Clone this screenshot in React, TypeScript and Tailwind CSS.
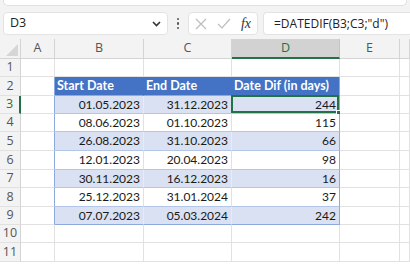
import React from "react";

const COLS = [21, 34, 89, 88, 108, 60, 10];
const LETTERS = ["A", "B", "C", "D", "E", ""];
const ROW_H = [18, 19, 18, 18, 19, 19, 18, 19, 18, 18, 19];

const DATA: [string, string, string][] = [
  ["01.05.2023", "31.12.2023", "244"],
  ["08.06.2023", "01.10.2023", "115"],
  ["26.08.2023", "31.10.2023", "66"],
  ["12.01.2023", "20.04.2023", "98"],
  ["30.11.2023", "16.12.2023", "16"],
  ["25.12.2023", "31.01.2024", "37"],
  ["07.07.2023", "05.03.2024", "242"],
];

const uiFont = { fontFamily: '"Open Sans", "Noto Sans", sans-serif' };
const cellFont = { fontFamily: 'Lato, "Liberation Sans", sans-serif' };

function Cell({
  w,
  className,
  children,
}: {
  w: number;
  className?: string;
  children?: React.ReactNode;
}) {
  return (
    <div
      className={"relative shrink-0 flex items-center border-r border-b " + (className ?? "")}
      style={{ width: w }}
    >
      {children}
    </div>
  );
}

export default function App() {
  return (
    <div className="w-[410px] h-[267px] overflow-hidden bg-[#f3f3f3] flex flex-col" style={uiFont}>
      {/* ribbon remnant */}
      <div className="h-[6px] mx-[3px] bg-white rounded-b-[5px] border border-t-0 border-[#e0e0e0]" />
      {/* formula bar */}
      <div className="mt-[6px] h-[23px] flex items-center pl-[3px]">
        <div className="w-[165px] h-[23px] bg-white rounded-[4px] border border-[#e3e3e3] flex items-center pl-[6px] pr-[6px]">
          <span className="text-[12.5px] text-[#222]">D3</span>
          <svg className="ml-auto" width="9" height="6" viewBox="0 0 9 6">
            <path d="M1 1 L4.5 4.5 L8 1" stroke="#333" strokeWidth="1.6" fill="none" />
          </svg>
        </div>
        <div className="w-[20px] flex flex-col items-center gap-[2px]">
          <div className="w-[2.5px] h-[2.5px] rounded-full bg-[#555]" />
          <div className="w-[2.5px] h-[2.5px] rounded-full bg-[#555]" />
          <div className="w-[2.5px] h-[2.5px] rounded-full bg-[#555]" />
        </div>
        <div className="w-[70px] h-[23px] bg-white rounded-[4px] border border-[#e3e3e3] flex items-center px-[6px]">
          <svg width="12" height="12" viewBox="0 0 12 12">
            <path d="M1 1 L11 11 M11 1 L1 11" stroke="#bdbdbd" strokeWidth="1.2" fill="none" />
          </svg>
          <svg className="ml-[10px]" width="14" height="11" viewBox="0 0 14 11">
            <path d="M1 6 L5 10 L13 1" stroke="#bdbdbd" strokeWidth="1.2" fill="none" />
          </svg>
          <span
            className="ml-auto text-[14px] italic text-[#333] leading-none"
            style={{ fontFamily: '"Liberation Serif", "DejaVu Serif", serif' }}
          >
            fx
          </span>
        </div>
        <div className="ml-[5px] flex-1 h-[23px] bg-white rounded-l-[4px] border border-r-0 border-[#e3e3e3] flex items-center pl-[10px]">
          <span className="text-[12px] text-[#222]">=DATEDIF(B3;C3;"d")</span>
        </div>
      </div>
      {/* column headers */}
      <div className="mt-[4px] h-[20px] flex">
        <div
          className="shrink-0 relative border-r border-b border-[#d4d4d4]"
          style={{ width: COLS[0] }}
        >
          <svg className="absolute right-[2px] bottom-[2px]" width="12" height="12" viewBox="0 0 12 12">
            <path d="M12 0 L12 12 L0 12 Z" fill="#d6d6d6" />
          </svg>
        </div>
        {LETTERS.map((l, i) => (
          <div
            key={i}
            className={
              "shrink-0 flex items-center justify-center text-[12.5px] border-r " +
              (l === "D"
                ? "bg-[#d2d2d2] text-[#217346] border-b-2 border-b-[#217346] border-r-[#c4c4c4]"
                : "text-[#555] border-b border-[#d4d4d4]")
            }
            style={{ width: COLS[i + 1] }}
          >
            {l}
          </div>
        ))}
      </div>
      {/* rows */}
      <div className="bg-white flex-1">
        {ROW_H.map((h, r) => {
          const row = r + 1;
          const inTable = row >= 2 && row <= 9;
          const isHeader = row === 2;
          const banded = row >= 3 && row <= 9 && row % 2 === 1;
          const d = row >= 3 && row <= 9 ? DATA[row - 3] : null;
          const tBg = isHeader ? "bg-[#4472c4]" : banded ? "bg-[#d9e1f2]" : "bg-white";
          const tBorderB = isHeader
            ? "border-b-[#8ea9db]"
            : row === 9
            ? "border-b-[#8ea9db]"
            : "border-b-[#b4c6e7]";
          const innerR = isHeader ? "border-r-[#4472c4]" : banded ? "border-r-[#e6ebf6]" : "border-r-[#e1e1e1]";
          return (
            <div key={row} className="flex" style={{ height: h }}>
              <Cell
                w={COLS[0]}
                className={
                  "justify-center bg-[#f3f3f3] text-[12.5px] border-b-[#e1e1e1] " +
                  (row === 3
                    ? "text-[#217346] border-r-2 border-r-[#217346]"
                    : "text-[#555] border-r-[#d4d4d4]")
                }
              >
                <span style={uiFont}>{row}</span>
              </Cell>
              {/* A */}
              <Cell
                w={COLS[1]}
                className={
                  "border-b-[#e1e1e1] " + (inTable ? "border-r-[#8ea9db]" : "border-r-[#e1e1e1]")
                }
              />
              {/* B, C, D */}
              {[0, 1, 2].map((c) => {
                const last = c === 2;
                if (!inTable) {
                  return <Cell key={c} w={COLS[c + 2]} className="border-b-[#e1e1e1] border-r-[#e1e1e1]" />;
                }
                const text = isHeader ? ["Start Date", "End Date", "Date Dif (in days)"][c] : d![c];
                return (
                  <Cell
                    key={c}
                    w={COLS[c + 2]}
                    className={
                      tBg +
                      " " +
                      tBorderB +
                      " " +
                      (last ? "border-r-[#8ea9db]" : innerR) +
                      (isHeader
                        ? " text-white font-bold justify-start pl-[2px]"
                        : " text-[#1a1a1a] justify-end pr-[3px]")
                    }
                  >
                    <span className={isHeader ? "text-[12.5px]" : "text-[12px]"} style={cellFont}>
                      {text}
                    </span>
                    {row === 3 && last && (
                      <div className="absolute -left-px -top-px w-[calc(100%+1px)] h-[calc(100%+1px)] border-2 border-[#217346]">
                        <div className="absolute -right-[4px] -bottom-[4px] w-[5px] h-[5px] bg-[#217346] border border-white" />
                      </div>
                    )}
                  </Cell>
                );
              })}
              {/* E */}
              <Cell w={COLS[5]} className="border-b-[#e1e1e1] border-r-[#e1e1e1]" />
              <Cell w={COLS[6]} className="border-b-[#e1e1e1] border-r-[#e1e1e1]" />
            </div>
          );
        })}
      </div>
    </div>
  );
}
